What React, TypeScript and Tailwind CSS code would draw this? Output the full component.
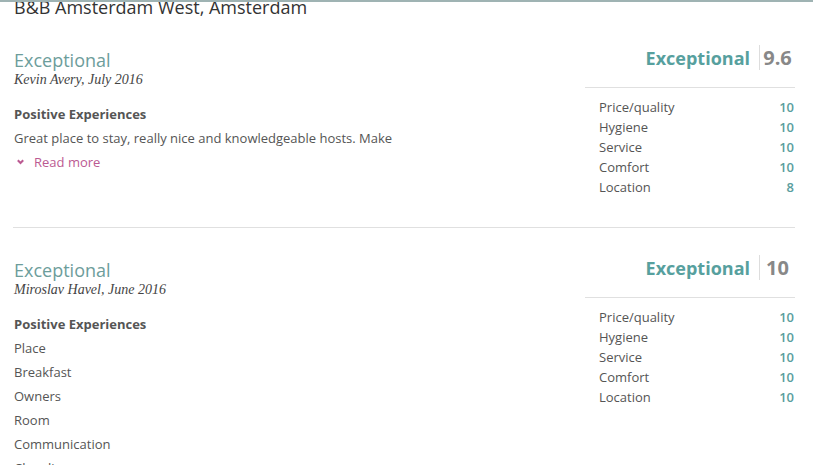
import React from 'react'

type Review = {
  author: string
  score: string
  items: string[]
  text?: string
  ratings: [string, string][]
}

const reviews: Review[] = [
  {
    author: 'Kevin Avery, July 2016',
    score: '9.6',
    items: [],
    text: 'Great place to stay, really nice and knowledgeable hosts. Make',
    ratings: [
      ['Price/quality', '10'],
      ['Hygiene', '10'],
      ['Service', '10'],
      ['Comfort', '10'],
      ['Location', '8'],
    ],
  },
  {
    author: 'Miroslav Havel, June 2016',
    score: '10',
    items: ['Place', 'Breakfast', 'Owners', 'Room', 'Communication', 'Cleanliness'],
    ratings: [
      ['Price/quality', '10'],
      ['Hygiene', '10'],
      ['Service', '10'],
      ['Comfort', '10'],
      ['Location', '10'],
    ],
  },
]

const ReviewCard = ({ r, first }: { r: Review; first: boolean }) => {
  return (
    <div className={`flex ${first ? 'pt-[25px] pb-[30px] border-b border-[#e0e0e0]' : 'pt-[28px]'}`}>
      <div className="flex-1 pt-[2px] pl-px">
        <p className="text-[18px] leading-[24px] text-[#6d9d9b]">Exceptional</p>
        <p className="font-['Liberation_Serif',serif] italic text-[14px] leading-[16px] text-[#444]">{r.author}</p>
        <p className="mt-[14px] text-[13px] leading-[24px] font-bold text-[#555]">Positive Experiences</p>
        {r.text && (
          <>
            <p className="text-[13px] leading-[24px] text-[#555]">{r.text}</p>
            <div className="flex items-center text-[13px] leading-[24px] text-[#bb5a92]">
              <svg width="7" height="6" viewBox="0 0 7 6" className="ml-[3px] mr-[10px]">
                <path d="M0.8 1.2 L3.5 4 L6.2 1.2" stroke="#bb5a92" strokeWidth="2" fill="none" />
              </svg>
              Read more
            </div>
          </>
        )}
        {r.items.map((it) => (
          <p key={it} className="text-[13px] leading-[24px] text-[#555]">{it}</p>
        ))}
      </div>
      <div className="w-[210px] -mt-[1px]">
        <div className="flex justify-end items-center pb-[17px] border-b border-[#e0e0e0]">
          <span className="text-[18px] leading-[24px] font-bold text-[#57a09e] pr-[9px]">Exceptional</span>
          <span className="w-[36px] border-l border-[#ddd] text-center text-[20px] leading-[25px] font-bold text-[#888]">
            {r.score}
          </span>
        </div>
        <div className="mt-[9px] pl-[14px]">
          {r.ratings.map(([k, v]) => (
            <div key={k} className="flex justify-between text-[13px] leading-[20px]">
              <span className="text-[#555]">{k}</span>
              <span className="font-semibold text-[#5a9e9e] pr-px">{v}</span>
            </div>
          ))}
        </div>
      </div>
    </div>
  )
}

export default function App() {
  return (
    <div className="h-[465px] overflow-hidden bg-white border-t-2 border-[#9fb3b3] font-['Open_Sans',sans-serif]">
      <div className="mx-[13px] w-[782px]">
        <h1 className="-mt-[9px] pl-px text-[18px] leading-[28px] text-[#333]">B&amp;B Amsterdam West, Amsterdam</h1>
        {reviews.map((r, i) => (
          <ReviewCard key={r.author} r={r} first={i === 0} />
        ))}
      </div>
    </div>
  )
}
